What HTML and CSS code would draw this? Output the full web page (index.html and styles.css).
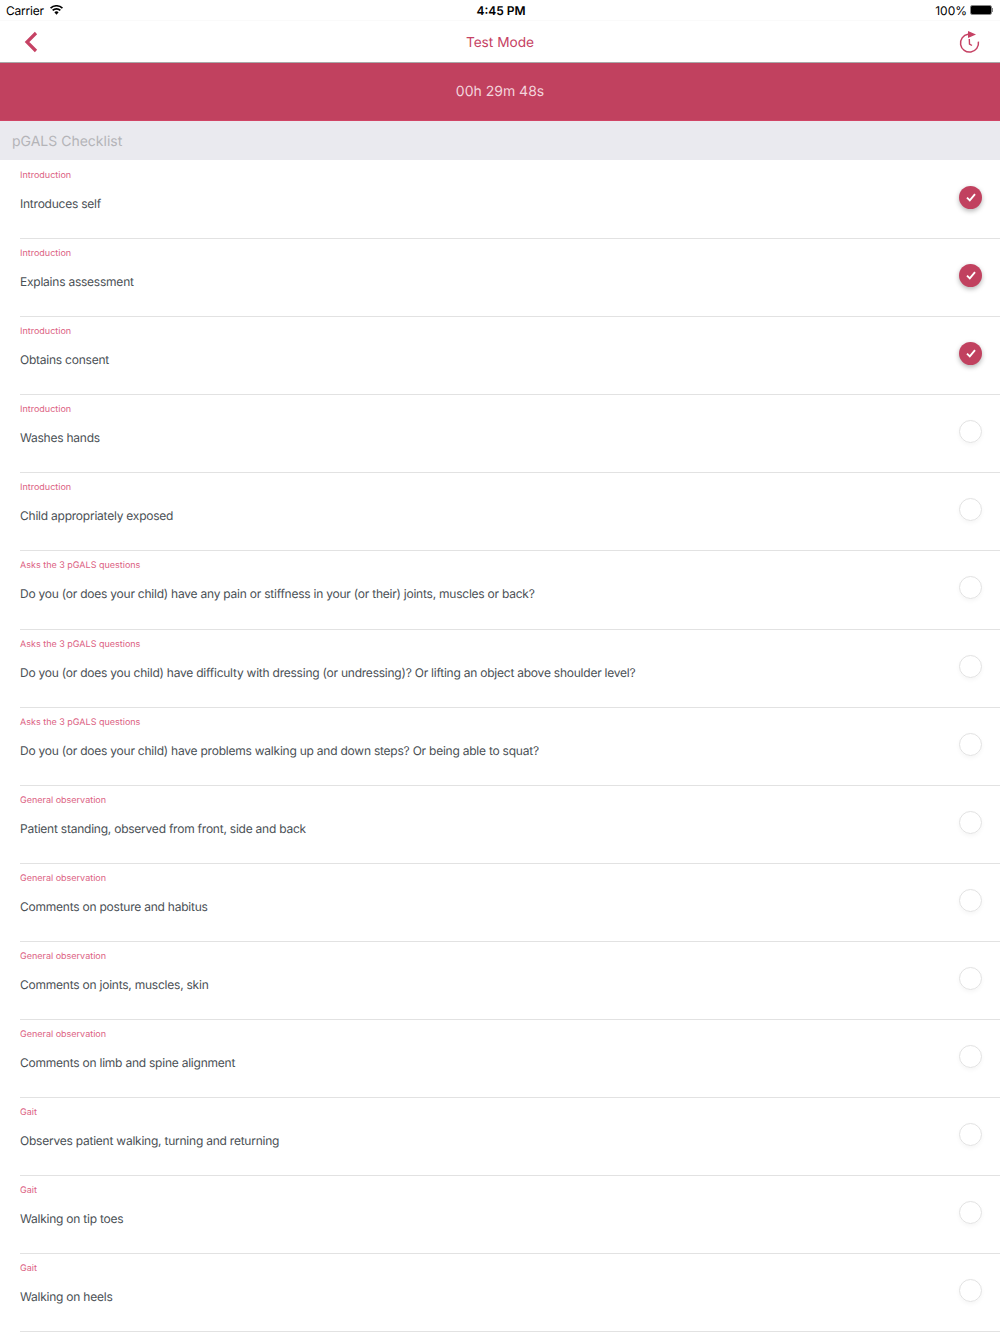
FILE: index.html
```html
<!DOCTYPE html>
<html lang="en">
<head>
<meta charset="UTF-8">
<title>Test Mode</title>
<link rel="stylesheet" href="styles.css">
</head>
<body>
<div class="status-bar">
  <div class="status-left">
    <span>Carrier</span>
    <svg class="wifi" width="13" height="10" viewBox="0 0 14 10"><path d="M7 10 4.7 7.4a3.4 3.4 0 0 1 4.6 0zM3.6 6.2 2.2 4.7a7.2 7.2 0 0 1 9.6 0l-1.4 1.5a5.2 5.2 0 0 0-6.8 0zM1.2 3.6 0 2.3a10.4 10.4 0 0 1 14 0l-1.2 1.3a8.6 8.6 0 0 0-11.6 0z" fill="#000"/></svg>
  </div>
  <div class="status-time">4:45 PM</div>
  <div class="status-right">
    <span>100%</span>
    <div class="battery"><div class="battery-fill"></div></div>
    <div class="battery-tip"></div>
  </div>
</div>

<header class="nav-bar">
  <svg class="back" width="14" height="22" viewBox="0 0 14 22"><path d="M12 2 3 11l9 9" fill="none" stroke="#c64264" stroke-width="3.2"/></svg>
  <div class="nav-title">Test Mode</div>
  <svg class="history" width="24" height="24" viewBox="0 0 24 24">
    <path d="M10 4.2A9 9 0 1 0 20.4 11.7" fill="none" stroke="#c64264" stroke-width="1.5"/>
    <path d="M10 1 18 4.5 10 8z" fill="#c64264"/>
    <path d="M11.3 9 11.5 14 14 15.5" fill="none" stroke="#c64264" stroke-width="1.4"/>
  </svg>
</header>

<div class="timer">00h 29m 48s</div>
<div class="section-title">pGALS Checklist</div>

<ul class="checklist">
  <li class="row"><div class="row-text"><div class="category">Introduction</div><div class="question">Introduces self</div></div><div class="tick done"><svg width="10" height="9" viewBox="0 0 10 9"><path d="M1 4.6 3.8 7.4 9 1.2" fill="none" stroke="#fff" stroke-width="1.9"/></svg></div></li>
  <li class="row"><div class="row-text"><div class="category">Introduction</div><div class="question">Explains assessment</div></div><div class="tick done"><svg width="10" height="9" viewBox="0 0 10 9"><path d="M1 4.6 3.8 7.4 9 1.2" fill="none" stroke="#fff" stroke-width="1.9"/></svg></div></li>
  <li class="row"><div class="row-text"><div class="category">Introduction</div><div class="question">Obtains consent</div></div><div class="tick done"><svg width="10" height="9" viewBox="0 0 10 9"><path d="M1 4.6 3.8 7.4 9 1.2" fill="none" stroke="#fff" stroke-width="1.9"/></svg></div></li>
  <li class="row"><div class="row-text"><div class="category">Introduction</div><div class="question">Washes hands</div></div><div class="tick"></div></li>
  <li class="row"><div class="row-text"><div class="category">Introduction</div><div class="question">Child appropriately exposed</div></div><div class="tick"></div></li>
  <li class="row"><div class="row-text"><div class="category">Asks the 3 pGALS questions</div><div class="question">Do you (or does your child) have any pain or stiffness in your (or their) joints, muscles or back?</div></div><div class="tick"></div></li>
  <li class="row"><div class="row-text"><div class="category">Asks the 3 pGALS questions</div><div class="question">Do you (or does you child) have difficulty with dressing (or undressing)? Or lifting an object above shoulder level?</div></div><div class="tick"></div></li>
  <li class="row"><div class="row-text"><div class="category">Asks the 3 pGALS questions</div><div class="question">Do you (or does your child) have problems walking up and down steps? Or being able to squat?</div></div><div class="tick"></div></li>
  <li class="row"><div class="row-text"><div class="category">General observation</div><div class="question">Patient standing, observed from front, side and back</div></div><div class="tick"></div></li>
  <li class="row"><div class="row-text"><div class="category">General observation</div><div class="question">Comments on posture and habitus</div></div><div class="tick"></div></li>
  <li class="row"><div class="row-text"><div class="category">General observation</div><div class="question">Comments on joints, muscles, skin</div></div><div class="tick"></div></li>
  <li class="row"><div class="row-text"><div class="category">General observation</div><div class="question">Comments on limb and spine alignment</div></div><div class="tick"></div></li>
  <li class="row"><div class="row-text"><div class="category">Gait</div><div class="question">Observes patient walking, turning and returning</div></div><div class="tick"></div></li>
  <li class="row"><div class="row-text"><div class="category">Gait</div><div class="question">Walking on tip toes</div></div><div class="tick"></div></li>
  <li class="row"><div class="row-text"><div class="category">Gait</div><div class="question">Walking on heels</div></div><div class="tick"></div></li>
</ul>
</body>
</html>
```

FILE: styles.css
```css
html, body {
  margin: 0;
  height: 1334px;
  overflow: hidden;
}
body {
  background: #fff;
  font-family: Inter, "Liberation Sans", sans-serif;
  text-rendering: geometricPrecision;
  color: #000;
}
.status-bar {
  height: 20px;
  display: grid;
  grid-template-columns: 1fr auto 1fr;
  align-items: center;
  font-size: 12px;
  padding: 0 7px 0 6px;
}
.status-left {
  display: flex;
  align-items: center;
  gap: 6px;
}
.status-left span {
  letter-spacing: -0.2px;
}
.status-time {
  font-weight: 600;
  margin-left: 3px;
}
.status-right {
  display: flex;
  justify-content: flex-end;
  align-items: center;
  gap: 3px;
}
.battery {
  width: 20px;
  height: 8px;
  border: 1px solid #888;
  border-radius: 2px;
}
.battery-fill {
  height: 100%;
  background: #000;
  border-radius: 1px;
}
.battery-tip {
  width: 1px;
  height: 4px;
  background: #888;
  margin-left: -3px;
}
.nav-bar {
  height: 41px;
  border-top: 1px solid #fafafa;
  border-bottom: 1px solid #a8a8a8;
  display: grid;
  grid-template-columns: 1fr auto 1fr;
  align-items: center;
  padding: 0 18px 0 24px;
}
.history {
  justify-self: end;
}
.nav-title {
  color: #c64264;
  font-size: 13.7px;
  padding: 2px 6px 0 0;
}
.timer {
  height: 58px;
  box-sizing: border-box;
  background: #c1415f;
  border-bottom: 1px solid #d04565;
  color: #f3d5dc;
  font-size: 14px;
  display: flex;
  align-items: center;
  justify-content: center;
}
.section-title {
  height: 38px;
  background: #eaeaef;
  color: #b4b4b8;
  font-size: 14px;
  padding: 1px 0 0 12px;
  display: flex;
  align-items: center;
}
.checklist {
  list-style: none;
  margin: 1px 0 0;
  padding: 0;
}
.row {
  height: 78.1px;
  box-sizing: border-box;
  margin-left: 20px;
  padding-right: 18px;
  border-bottom: 1px solid #e2e2e2;
  display: flex;
  justify-content: space-between;
  align-items: flex-start;
}
.category {
  color: #dc6283;
  font-size: 9px;
  line-height: 12px;
  margin-top: 9px;
}
.question {
  color: #4a5055;
  font-size: 12px;
  letter-spacing: -0.23px;
  line-height: 16px;
  margin-top: 14px;
}
.tick {
  width: 23px;
  height: 23px;
  box-sizing: border-box;
  margin-top: 25px;
  border-radius: 50%;
  border: 1px solid #e2e2e2;
  box-shadow: 0 2px 4px rgba(0, 0, 0, 0.04);
}
.tick.done {
  background: #c1415f;
  border: none;
  box-shadow: 0 2px 5px rgba(0, 0, 0, 0.3);
  display: flex;
  align-items: center;
  justify-content: center;
}
```
